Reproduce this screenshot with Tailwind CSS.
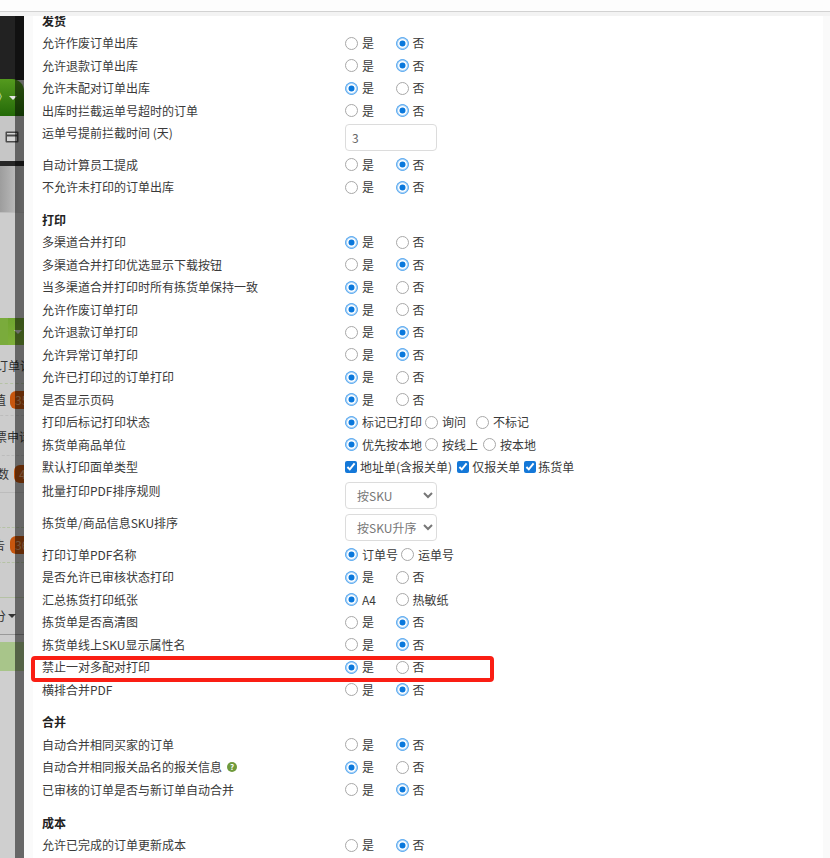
<!DOCTYPE html>
<html lang="zh">
<head>
<meta charset="utf-8">
<script src="https://cdn.jsdelivr.net/npm/@tailwindcss/browser@4"></script>
</head>
<body class="bg-white overflow-hidden">
<div class="relative w-[830px] h-[858px] overflow-hidden bg-white text-[12px] leading-[22.5px] text-[#3a3a3a] font-['Noto_Sans_CJK_SC','Noto_Sans',sans-serif] [&_input[type=radio]]:appearance-none [&_input[type=radio]]:w-[13px] [&_input[type=radio]]:h-[13px] [&_input[type=radio]]:shrink-0 [&_input[type=radio]]:rounded-full [&_input[type=radio]]:border [&_input[type=radio]]:border-[#a8a8a8] [&_input[type=radio]]:bg-white [&_input[type=radio]:checked]:border-[#62aef2] [&_input[type=radio]:checked]:bg-[#0a78dc] [&_input[type=radio]:checked]:shadow-[inset_0_0_0_1px_#a8d2f7,inset_0_0_0_2.5px_white]">
  <div class="h-[11px] bg-[#fdfdfd]"></div>
  <div class="h-px bg-[#d2d2d2]"></div>
  <div class="h-[4px] bg-[#f3f3f3]"></div>
  <div class="flex h-[842px]">
    <!-- page behind the dialog -->
    <div class="relative w-[24px] shrink-0 overflow-hidden bg-[#cccccc] whitespace-nowrap text-[#333]">
      <div class="h-[64px] bg-[#222222]"></div>
      <div class="h-[37px] -mt-px rounded-tr-[12px] bg-gradient-to-b from-[#549a1e] to-[#236a08] flex items-center gap-[1px] text-[#cfe6b8]"><span class="-ml-[4px]">》</span><span class="w-0 h-0 border-x-[4px] border-x-transparent border-t-[4px] border-t-[#e6e6e6]"></span></div>
      <div class="h-[45px] bg-[#c6c6c6] flex items-center pl-[5px] pb-[3px]">
        <svg class="w-[14px] h-[12px]" viewBox="0 0 14 12" fill="none"><rect x="0.5" y="0.5" width="13" height="11" rx="1" fill="#4a4a4a"/><rect x="2" y="2" width="10" height="1.5" fill="#d5d5d5"/><rect x="2" y="5.5" width="10" height="4.5" fill="#d5d5d5"/></svg>
      </div>
      <div class="h-[5px] bg-[#262626]"></div>
      <div class="h-[46px] bg-gradient-to-r from-[#9d9d9d] to-[#c9c9c9]"></div>
      <div class="h-[106px] bg-[#cdcdcd] border-t border-[#bdbdbd]"></div>
      <div class="h-[27px] bg-gradient-to-b from-[#6fa52f] to-[#7fb03a] flex justify-end items-center border-l-[8px] border-l-[#7aab3c] pr-[2px]"><span class="w-0 h-0 border-x-[4px] border-x-transparent border-t-[4px] border-t-[#d8d8d8]"></span></div>
      <div class="h-[38px] flex items-center pt-[5px] -ml-[4px]">订单诉</div>
      <div class="h-[32px] flex items-center gap-[4px] border-t border-dashed border-[#b5c2a5] pt-[1px] -ml-[6px]"><span>值</span><span class="rounded-[6px] bg-[#c7560e] text-[#e9a878] pl-[5px] h-[18px] leading-[18px] w-[30px] shrink-0">35</span></div>
      <div class="h-[40px] flex items-center pt-[4px] border-t border-dashed border-[#bcbcbc] -ml-[5px]">票申请</div>
      <div class="h-[37px] flex items-center gap-[5px] border-t border-dashed border-[#bcbcbc] -ml-[3px]"><span>数</span><span class="rounded-[6px] bg-[#c7560e] text-[#e9a878] pl-[5px] h-[18px] leading-[18px] w-[24px] shrink-0">4</span></div>
      <div class="h-[35px] border-t border-[#bcbcbc]"></div>
      <div class="h-[36px] flex items-center gap-[5px] border-y border-dashed border-[#b5c2a5] -ml-[7px]"><span>告</span><span class="rounded-[6px] bg-[#c7560e] text-[#e9a878] pl-[5px] h-[18px] leading-[18px] w-[30px] shrink-0">36</span></div>
      <div class="h-[35px] border-b border-[#b5c2a5]"></div>
      <div class="h-[37px] flex items-center gap-[2px] border-b border-[#999] -ml-[6px]"><span>分</span><span class="w-0 h-0 border-x-[4px] border-x-transparent border-t-[4px] border-t-[#333]"></span></div>
      <div class="h-[7px]"></div>
      <div class="h-[29px] bg-[#a8c58a]"></div>
      <div class="h-[187px] bg-[#cfcfcf]"></div>
      <div class="absolute inset-y-0 left-[15px] right-0 bg-black/50"></div>
    </div>
    <div class="w-[9px] shrink-0 bg-[#fafafa]"></div>
    <!-- dialog -->
    <div class="flex-1 min-w-0 overflow-hidden pl-[9px]">
      <div class="-mt-[6.5px]">
        <h4 class="font-bold text-[#222] h-[22.5px]">发货</h4>
        <div class="flex h-[22.5px]"><span class="w-[303px]">允许作废订单出库</span><div class="flex items-center"><input type="radio" name="a1"><span class="ml-[4px] w-[34px]">是</span><input type="radio" name="a1" checked><span class="ml-[3.5px]">否</span></div></div>
        <div class="flex h-[22.5px]"><span class="w-[303px]">允许退款订单出库</span><div class="flex items-center"><input type="radio" name="a2"><span class="ml-[4px] w-[34px]">是</span><input type="radio" name="a2" checked><span class="ml-[3.5px]">否</span></div></div>
        <div class="flex h-[22.5px]"><span class="w-[303px]">允许未配对订单出库</span><div class="flex items-center"><input type="radio" name="a3" checked><span class="ml-[4px] w-[34px]">是</span><input type="radio" name="a3"><span class="ml-[3.5px]">否</span></div></div>
        <div class="flex h-[22.5px]"><span class="w-[303px]">出库时拦截运单号超时的订单</span><div class="flex items-center"><input type="radio" name="a4"><span class="ml-[4px] w-[34px]">是</span><input type="radio" name="a4" checked><span class="ml-[3.5px]">否</span></div></div>
        <div class="flex h-[31.5px]"><span class="w-[303px]">运单号提前拦截时间 (天)</span><input type="text" value="3" class="w-[92px] h-[27px] mt-[2px] px-[6px] border border-[#dcdcdc] rounded-[4px] text-[#666] bg-white"></div>
        <div class="flex h-[22.5px]"><span class="w-[303px]">自动计算员工提成</span><div class="flex items-center"><input type="radio" name="a5"><span class="ml-[4px] w-[34px]">是</span><input type="radio" name="a5" checked><span class="ml-[3.5px]">否</span></div></div>
        <div class="flex h-[22.5px]"><span class="w-[303px]">不允许未打印的订单出库</span><div class="flex items-center"><input type="radio" name="a6"><span class="ml-[4px] w-[34px]">是</span><input type="radio" name="a6" checked><span class="ml-[3.5px]">否</span></div></div>

        <h4 class="font-bold text-[#222] h-[22.5px] mt-[10px]">打印</h4>
        <div class="flex h-[22.5px]"><span class="w-[303px]">多渠道合并打印</span><div class="flex items-center"><input type="radio" name="b1" checked><span class="ml-[4px] w-[34px]">是</span><input type="radio" name="b1"><span class="ml-[3.5px]">否</span></div></div>
        <div class="flex h-[22.5px]"><span class="w-[303px]">多渠道合并打印优选显示下载按钮</span><div class="flex items-center"><input type="radio" name="b2"><span class="ml-[4px] w-[34px]">是</span><input type="radio" name="b2" checked><span class="ml-[3.5px]">否</span></div></div>
        <div class="flex h-[22.5px]"><span class="w-[303px]">当多渠道合并打印时所有拣货单保持一致</span><div class="flex items-center"><input type="radio" name="b3" checked><span class="ml-[4px] w-[34px]">是</span><input type="radio" name="b3"><span class="ml-[3.5px]">否</span></div></div>
        <div class="flex h-[22.5px]"><span class="w-[303px]">允许作废订单打印</span><div class="flex items-center"><input type="radio" name="b4" checked><span class="ml-[4px] w-[34px]">是</span><input type="radio" name="b4"><span class="ml-[3.5px]">否</span></div></div>
        <div class="flex h-[22.5px]"><span class="w-[303px]">允许退款订单打印</span><div class="flex items-center"><input type="radio" name="b5"><span class="ml-[4px] w-[34px]">是</span><input type="radio" name="b5" checked><span class="ml-[3.5px]">否</span></div></div>
        <div class="flex h-[22.5px]"><span class="w-[303px]">允许异常订单打印</span><div class="flex items-center"><input type="radio" name="b6"><span class="ml-[4px] w-[34px]">是</span><input type="radio" name="b6" checked><span class="ml-[3.5px]">否</span></div></div>
        <div class="flex h-[22.5px]"><span class="w-[303px]">允许已打印过的订单打印</span><div class="flex items-center"><input type="radio" name="b7" checked><span class="ml-[4px] w-[34px]">是</span><input type="radio" name="b7"><span class="ml-[3.5px]">否</span></div></div>
        <div class="flex h-[22.5px]"><span class="w-[303px]">是否显示页码</span><div class="flex items-center"><input type="radio" name="b8" checked><span class="ml-[4px] w-[34px]">是</span><input type="radio" name="b8"><span class="ml-[3.5px]">否</span></div></div>
        <div class="flex h-[22.5px]"><span class="w-[303px]">打印后标记打印状态</span><div class="flex items-center"><input type="radio" name="b9" checked><span class="ml-[4px]">标记已打印</span><input type="radio" name="b9" class="ml-[3px]"><span class="ml-[4px]">询问</span><input type="radio" name="b9" class="ml-[10px]"><span class="ml-[4px]">不标记</span></div></div>
        <div class="flex h-[22.5px]"><span class="w-[303px]">拣货单商品单位</span><div class="flex items-center"><input type="radio" name="b10" checked><span class="ml-[4px]">优先按本地</span><input type="radio" name="b10" class="ml-[3px]"><span class="ml-[4px]">按线上</span><input type="radio" name="b10" class="ml-[5px]"><span class="ml-[4px]">按本地</span></div></div>
        <div class="flex h-[23.5px]"><span class="w-[303px]">默认打印面单类型</span><div class="flex items-center h-[22.5px]"><input type="checkbox" checked class="w-[12px] h-[12px] m-0 accent-[#1478d8]"><span class="ml-[3px]">地址单(含报关单)</span><input type="checkbox" checked class="w-[12px] h-[12px] ml-[5px] accent-[#1478d8]"><span class="ml-[3px]">仅报关单</span><input type="checkbox" checked class="w-[12px] h-[12px] ml-[4px] accent-[#1478d8]"><span class="ml-[2px]">拣货单</span></div></div>
        <div class="flex h-[32px]"><span class="w-[303px]">批量打印PDF排序规则</span><select class="w-[92px] h-[27px] mt-[2.5px] pl-[7px] border border-[#dcdcdc] rounded-[4px] text-[#777] bg-white"><option>按SKU</option></select></div>
        <div class="flex h-[32px]"><span class="w-[303px]">拣货单/商品信息SKU排序</span><select class="w-[92px] h-[27px] mt-[2.5px] pl-[7px] border border-[#dcdcdc] rounded-[4px] text-[#777] bg-white"><option>按SKU升序</option></select></div>
        <div class="flex h-[22.5px]"><span class="w-[303px]">打印订单PDF名称</span><div class="flex items-center"><input type="radio" name="c1" checked><span class="ml-[4px]">订单号</span><input type="radio" name="c1" class="ml-[3px]"><span class="ml-[4px]">运单号</span></div></div>
        <div class="flex h-[22.5px]"><span class="w-[303px]">是否允许已审核状态打印</span><div class="flex items-center"><input type="radio" name="c2" checked><span class="ml-[4px] w-[34px]">是</span><input type="radio" name="c2"><span class="ml-[3.5px]">否</span></div></div>
        <div class="flex h-[22.5px]"><span class="w-[303px]">汇总拣货打印纸张</span><div class="flex items-center"><input type="radio" name="c3" checked><span class="ml-[4px] w-[34px]">A4</span><input type="radio" name="c3"><span class="ml-[3.5px]">热敏纸</span></div></div>
        <div class="flex h-[22.5px]"><span class="w-[303px]">拣货单是否高清图</span><div class="flex items-center"><input type="radio" name="c4"><span class="ml-[4px] w-[34px]">是</span><input type="radio" name="c4" checked><span class="ml-[3.5px]">否</span></div></div>
        <div class="flex h-[22.5px]"><span class="w-[303px]">拣货单线上SKU显示属性名</span><div class="flex items-center"><input type="radio" name="c5"><span class="ml-[4px] w-[34px]">是</span><input type="radio" name="c5" checked><span class="ml-[3.5px]">否</span></div></div>
        <div class="flex h-[22.5px]"><span class="w-[303px]">禁止一对多配对打印</span><div class="flex items-center"><input type="radio" name="c6" checked><span class="ml-[4px] w-[34px]">是</span><input type="radio" name="c6"><span class="ml-[3.5px]">否</span></div></div>
        <div class="flex h-[22.5px]"><span class="w-[303px]">横排合并PDF</span><div class="flex items-center"><input type="radio" name="c7"><span class="ml-[4px] w-[34px]">是</span><input type="radio" name="c7" checked><span class="ml-[3.5px]">否</span></div></div>

        <h4 class="font-bold text-[#222] h-[22.5px] mt-[10px]">合并</h4>
        <div class="flex h-[22.5px]"><span class="w-[303px]">自动合并相同买家的订单</span><div class="flex items-center"><input type="radio" name="d1"><span class="ml-[4px] w-[34px]">是</span><input type="radio" name="d1" checked><span class="ml-[3.5px]">否</span></div></div>
        <div class="flex h-[22.5px]"><div class="w-[303px] flex items-center gap-[5px]"><span>自动合并相同报关品名的报关信息</span><span class="w-[10px] h-[10px] rounded-full bg-[#6f9a3c] text-white text-[8px] leading-[10px] text-center font-bold">?</span></div><div class="flex items-center"><input type="radio" name="d2" checked><span class="ml-[4px] w-[34px]">是</span><input type="radio" name="d2"><span class="ml-[3.5px]">否</span></div></div>
        <div class="flex h-[22.5px]"><span class="w-[303px]">已审核的订单是否与新订单自动合并</span><div class="flex items-center"><input type="radio" name="d3"><span class="ml-[4px] w-[34px]">是</span><input type="radio" name="d3" checked><span class="ml-[3.5px]">否</span></div></div>

        <h4 class="font-bold text-[#222] h-[22.5px] mt-[10.5px]">成本</h4>
        <div class="flex h-[22.5px]"><span class="w-[303px]">允许已完成的订单更新成本</span><div class="flex items-center"><input type="radio" name="e1"><span class="ml-[4px] w-[34px]">是</span><input type="radio" name="e1" checked><span class="ml-[3.5px]">否</span></div></div>
      </div>
    </div>
    <div class="w-[7px] shrink-0 bg-[#fafafa]"></div>
  </div>
  <!-- red annotation -->
  <div class="absolute left-[31px] top-[656px] w-[463px] h-[26px] border-[4px] border-[#fa1e14] rounded-[4px]"></div>
</div>
</body>
</html>
